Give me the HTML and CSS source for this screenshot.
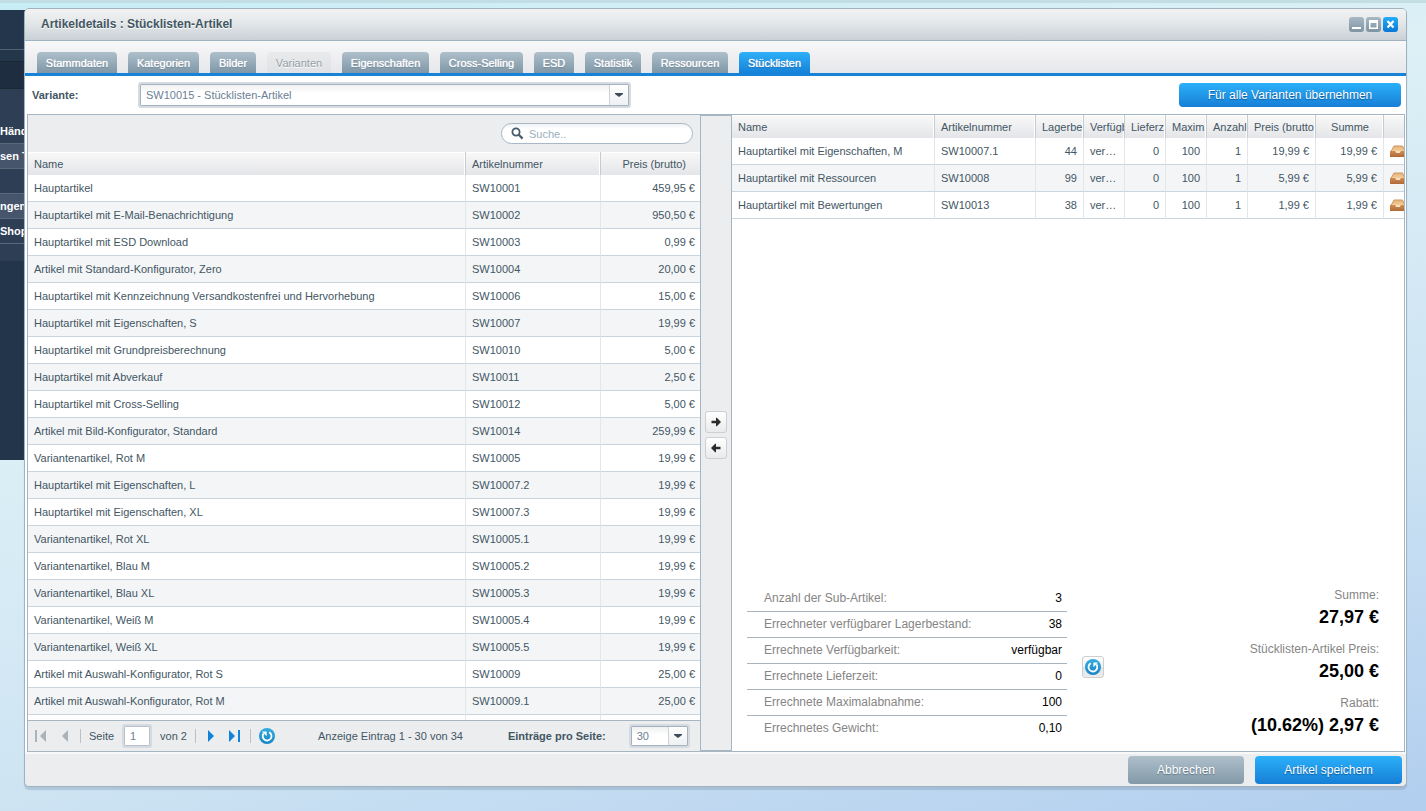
FILE: index.html
```html
<!DOCTYPE html>
<html lang="de">
<head>
<meta charset="utf-8">
<title>Artikeldetails : Stücklisten-Artikel</title>
<link rel="stylesheet" href="styles.css">
</head>
<body>
<svg class="defs" width="0" height="0" aria-hidden="true">
  <defs>
    <linearGradient id="boxTop" x1="0" y1="0" x2="0" y2="1"><stop offset="0" stop-color="#e2b37c"/><stop offset="1" stop-color="#f6cf9a"/></linearGradient>
    <linearGradient id="boxFront" x1="0" y1="0" x2="0" y2="1"><stop offset="0" stop-color="#d08c55"/><stop offset="1" stop-color="#b06a38"/></linearGradient>
    <linearGradient id="disc" x1="0" y1="0" x2="0" y2="1"><stop offset="0" stop-color="#35ade0"/><stop offset="1" stop-color="#1584c4"/></linearGradient>
    <symbol id="inbox" viewBox="0 0 16 12">
      <path d="M4 1h8.500l2.500 5.500h-14z" fill="url(#boxTop)" stroke="#cf9660"/>
      <path d="M0 6h5l1.500 2h3l1.500-2h5v6h-16z" fill="url(#boxFront)"/>
      <path d="M5 6h6l-1.500 2h-3z" fill="#fbe0b8"/>
    </symbol>
    <symbol id="reload" viewBox="0 0 16 16">
      <circle cx="8" cy="8" r="8" fill="url(#disc)"/>
      <path d="M10.200 4.200A4.400 4.400 0 1 1 4.600 5.400" fill="none" stroke="#fff" stroke-width="1.800"/>
      <path d="M3 3.600h4.600v4.600z" fill="#fff"/>
    </symbol>
    <symbol id="arrow" viewBox="0 0 10 10">
      <path d="M0.500 3.800h4.500V0.800h0.800L10 5l-4.200 4.200H5v-3H0.500z" fill="#2b2b2b"/>
    </symbol>
    <symbol id="caret" viewBox="0 0 8 4"><path d="M0 0h8v1L4 4 0 1z" fill="#3d4c5a"/></symbol>
  </defs>
</svg>

<nav class="sidebar" aria-label="Desktop">
  <div class="side-head"></div>
  <div class="side-sub"></div>
  <div class="side-dark"></div>
  <ul class="side-list">
    <li class="tall">Händ</li>
    <li class="light">sen T</li>
    <li></li>
    <li class="light">ngen</li>
    <li>Shop</li>
    <li class="end"></li>
  </ul>
</nav>

<main class="window">
  <header class="titlebar">
    <h1>Artikeldetails : Stücklisten-Artikel</h1>
    <div class="tools">
      <button type="button" aria-label="Minimieren"><svg width="15" height="15"><path d="M3 10h9v2h-9z" fill="#fff"/></svg></button>
      <button type="button" aria-label="Maximieren"><svg width="15" height="15"><path d="M3 3h9v9h-9zM4.500 6v4.500h6V6z" fill="#fff" fill-rule="evenodd"/></svg></button>
      <button type="button" class="close" aria-label="Schließen"><svg width="15" height="15"><path d="M4.500 4l6 6.500M10.500 4l-6 6.500" stroke="#fff" stroke-width="2.200"/></svg></button>
    </div>
  </header>

  <nav class="tabs" aria-label="Bereiche">
    <button type="button">Stammdaten</button>
    <button type="button">Kategorien</button>
    <button type="button">Bilder</button>
    <button type="button" disabled>Varianten</button>
    <button type="button">Eigenschaften</button>
    <button type="button">Cross-Selling</button>
    <button type="button">ESD</button>
    <button type="button">Statistik</button>
    <button type="button">Ressourcen</button>
    <button type="button" class="active">Stücklisten</button>
  </nav>

  <div class="variantbar">
    <label for="variant">Variante:</label>
    <span class="combo variant">
      <select id="variant"><option>SW10015 - Stücklisten-Artikel</option></select>
      <span class="trigger"><svg width="8" height="4"><use href="#caret"/></svg></span>
    </span>
    <button type="button" class="btn primary apply">Für alle Varianten übernehmen</button>
  </div>

  <div class="panels">
    <section class="source">
      <div class="searchbar">
        <span class="search">
          <svg width="13" height="13" viewBox="0 0 13 13"><circle cx="5" cy="5" r="3.600" fill="none" stroke="#475b6c" stroke-width="1.800"/><path d="M7.800 7.800L11.600 11.600" stroke="#475b6c" stroke-width="2.200"/></svg>
          <input type="text" placeholder="Suche.." aria-label="Suche">
        </span>
      </div>
      <div class="scroll">
        <table class="grid">
          <colgroup><col><col class="w135"><col class="w99"></colgroup>
          <thead><tr><th>Name</th><th>Artikelnummer</th><th class="sum">Preis (brutto)</th></tr></thead>
          <tbody>
            <tr><td>Hauptartikel</td><td>SW10001</td><td class="num">459,95 €</td></tr>
            <tr><td>Hauptartikel mit E-Mail-Benachrichtigung</td><td>SW10002</td><td class="num">950,50 €</td></tr>
            <tr><td>Hauptartikel mit ESD Download</td><td>SW10003</td><td class="num">0,99 €</td></tr>
            <tr><td>Artikel mit Standard-Konfigurator, Zero</td><td>SW10004</td><td class="num">20,00 €</td></tr>
            <tr><td>Hauptartikel mit Kennzeichnung Versandkostenfrei und Hervorhebung</td><td>SW10006</td><td class="num">15,00 €</td></tr>
            <tr><td>Hauptartikel mit Eigenschaften, S</td><td>SW10007</td><td class="num">19,99 €</td></tr>
            <tr><td>Hauptartikel mit Grundpreisberechnung</td><td>SW10010</td><td class="num">5,00 €</td></tr>
            <tr><td>Hauptartikel mit Abverkauf</td><td>SW10011</td><td class="num">2,50 €</td></tr>
            <tr><td>Hauptartikel mit Cross-Selling</td><td>SW10012</td><td class="num">5,00 €</td></tr>
            <tr><td>Artikel mit Bild-Konfigurator, Standard</td><td>SW10014</td><td class="num">259,99 €</td></tr>
            <tr><td>Variantenartikel, Rot M</td><td>SW10005</td><td class="num">19,99 €</td></tr>
            <tr><td>Hauptartikel mit Eigenschaften, L</td><td>SW10007.2</td><td class="num">19,99 €</td></tr>
            <tr><td>Hauptartikel mit Eigenschaften, XL</td><td>SW10007.3</td><td class="num">19,99 €</td></tr>
            <tr><td>Variantenartikel, Rot XL</td><td>SW10005.1</td><td class="num">19,99 €</td></tr>
            <tr><td>Variantenartikel, Blau M</td><td>SW10005.2</td><td class="num">19,99 €</td></tr>
            <tr><td>Variantenartikel, Blau XL</td><td>SW10005.3</td><td class="num">19,99 €</td></tr>
            <tr><td>Variantenartikel, Weiß M</td><td>SW10005.4</td><td class="num">19,99 €</td></tr>
            <tr><td>Variantenartikel, Weiß XL</td><td>SW10005.5</td><td class="num">19,99 €</td></tr>
            <tr><td>Artikel mit Auswahl-Konfigurator, Rot S</td><td>SW10009</td><td class="num">25,00 €</td></tr>
            <tr><td>Artikel mit Auswahl-Konfigurator, Rot M</td><td>SW10009.1</td><td class="num">25,00 €</td></tr>
            <tr><td></td><td></td><td></td></tr>
          </tbody>
        </table>
      </div>
      <div class="pager">
        <button type="button" disabled aria-label="Erste Seite"><svg width="14" height="14"><path d="M1 1h2v12H1zM12 1v12L6 7z" fill="#aab2ba"/></svg></button>
        <button type="button" disabled aria-label="Vorherige Seite"><svg width="16" height="14"><path d="M12 1v12L6 7z" fill="#aab2ba"/></svg></button>
        <i class="sep"></i>
        <label for="page">Seite</label>
        <input id="page" type="text" value="1">
        <span>von 2</span>
        <i class="sep"></i>
        <button type="button" aria-label="Nächste Seite"><svg width="14" height="14"><path d="M4 1v12L10 7z" fill="#1283d8"/></svg></button>
        <button type="button" aria-label="Letzte Seite"><svg width="16" height="14"><path d="M3 1v12L9 7zM12 1h2v12h-2z" fill="#1283d8"/></svg></button>
        <i class="sep"></i>
        <button type="button" aria-label="Aktualisieren"><svg width="16" height="16"><use href="#reload"/></svg></button>
        <span class="range">Anzeige Eintrag 1 - 30 von 34</span>
        <label class="bold" for="size">Einträge pro Seite:</label>
        <span class="combo size">
          <select id="size"><option>30</option></select>
          <span class="trigger"><svg width="8" height="4"><use href="#caret"/></svg></span>
        </span>
      </div>
    </section>

    <div class="mover">
      <button type="button" class="icon-btn" aria-label="Hinzufügen"><svg width="10" height="10"><use href="#arrow"/></svg></button>
      <button type="button" class="icon-btn back" aria-label="Entfernen"><svg width="10" height="10"><use href="#arrow"/></svg></button>
    </div>

    <section class="target">
      <div class="scroll">
        <table class="grid">
          <colgroup><col><col class="w101"><col class="w48"><col class="w41"><col class="w41"><col class="w41"><col class="w41"><col class="w68"><col class="w68"><col class="w20"></colgroup>
          <thead><tr><th>Name</th><th>Artikelnummer</th><th title="Lagerbestand">Lagerbe</th><th title="Verfügbarkeit">Verfügb</th><th title="Lieferzeit">Lieferz</th><th title="Maximalabnahme">Maxim</th><th>Anzahl</th><th title="Preis (brutto)">Preis (brutto</th><th class="sum">Summe</th><th></th></tr></thead>
          <tbody>
            <tr><td>Hauptartikel mit Eigenschaften, M</td><td>SW10007.1</td><td class="num">44</td><td>verfügbar</td><td class="num">0</td><td class="num">100</td><td class="num">1</td><td class="num">19,99 €</td><td class="num">19,99 €</td><td class="act"><svg width="16" height="12"><use href="#inbox"/></svg></td></tr>
            <tr><td>Hauptartikel mit Ressourcen</td><td>SW10008</td><td class="num">99</td><td>verfügbar</td><td class="num">0</td><td class="num">100</td><td class="num">1</td><td class="num">5,99 €</td><td class="num">5,99 €</td><td class="act"><svg width="16" height="12"><use href="#inbox"/></svg></td></tr>
            <tr><td>Hauptartikel mit Bewertungen</td><td>SW10013</td><td class="num">38</td><td>verfügbar</td><td class="num">0</td><td class="num">100</td><td class="num">1</td><td class="num">1,99 €</td><td class="num">1,99 €</td><td class="act"><svg width="16" height="12"><use href="#inbox"/></svg></td></tr>
          </tbody>
        </table>
      </div>
      <div class="summary">
        <dl class="facts">
          <div><dt>Anzahl der Sub-Artikel:</dt><dd>3</dd></div>
          <div><dt>Errechneter verfügbarer Lagerbestand:</dt><dd>38</dd></div>
          <div><dt>Errechnete Verfügbarkeit:</dt><dd>verfügbar</dd></div>
          <div><dt>Errechnete Lieferzeit:</dt><dd>0</dd></div>
          <div><dt>Errechnete Maximalabnahme:</dt><dd>100</dd></div>
          <div><dt>Errechnetes Gewicht:</dt><dd>0,10</dd></div>
        </dl>
        <button type="button" class="icon-btn" aria-label="Neu berechnen"><svg width="16" height="16"><use href="#reload" transform="matrix(-1 0 0 1 16 0)"/></svg></button>
        <dl class="totals">
          <div><dt>Summe:</dt><dd>27,97 €</dd></div>
          <div><dt>Stücklisten-Artikel Preis:</dt><dd>25,00 €</dd></div>
          <div><dt>Rabatt:</dt><dd>(10.62%) 2,97 €</dd></div>
        </dl>
      </div>
    </section>
  </div>

  <footer class="footer">
    <button type="button" class="btn secondary">Abbrechen</button>
    <button type="button" class="btn primary">Artikel speichern</button>
  </footer>
</main>
</body>
</html>
```

FILE: styles.css
```css
* { box-sizing: border-box; }

html { height: 100%; }

body {
  margin: 0;
  height: 100%;
  padding-top: 7px;
  border-top: 3px solid #c3dde5;
  overflow: hidden;
  background: linear-gradient(165deg, #c8edf6 0%, #dcf0f6 35%, #cfe5f3 65%, #b2ceef 100%);
  font: 11px/14px "Liberation Sans", Arial, sans-serif;
  color: #435663;
}

button, input, select { font: inherit; color: inherit; margin: 0; padding: 0; }
button { border: 0; background: none; }
svg { display: block; }
h1, dl, dd, ul { margin: 0; padding: 0; }
.defs { position: absolute; }

/* desktop sidebar */
.sidebar {
  width: 26px;
  height: 450px;
  overflow: hidden;
  background: #23354b;
  color: #fff;
  font-weight: bold;
  white-space: nowrap;
}
.side-head { height: 40px; border-bottom: 1px solid #506373; background: #23364b; }
.side-sub { height: 11px; background: #24364a; }
.side-dark { height: 28px; background: #1e2d3f; border-top: 1px solid #1a2838; border-bottom: 1px solid #1a2838; }
.side-list { list-style: none; background: #2e3e55; }
.side-list li { height: 25px; line-height: 24px; border-bottom: 1px solid #5a6a7b; }
.side-list .tall { height: 55px; padding-top: 30px; }
.side-list .light { background: #46556b; }
.side-list .end { height: 17px; border: 0; }

/* window */
.window {
  position: absolute;
  top: 8px;
  right: 19px;
  bottom: 24px;
  left: 24px;
  display: flex;
  flex-direction: column;
  border: 1px solid #a0b2c0;
  border-radius: 5px;
  background: #ebedef;
  box-shadow: 0 3px 1px rgba(120, 145, 170, 0.35);
}
.titlebar {
  display: flex;
  align-items: center;
  justify-content: space-between;
  height: 32px;
  padding: 0 8px 0 16px;
  border-bottom: 1px solid #a0b2c0;
  border-radius: 4px 4px 0 0;
  background: linear-gradient(#f2f2f2, #e4e7e9 45%, #c9d1d7);
}
.titlebar h1 { font-size: 12px; line-height: 16px; padding-bottom: 2px; text-shadow: 0 1px 0 #fff; }
.tools { display: flex; gap: 2px; }
.tools button { width: 15px; height: 15px; border-radius: 3px; background: linear-gradient(#a8b8c3, #7d94a3); }
.tools .close { background: linear-gradient(#25adf8, #0878d4); }

.tabs {
  display: grid;
  grid-template-columns: 80px 71px 46px 64px 87px 83px 40px 56px 76px 71px;
  align-items: end;
  gap: 11px;
  height: 35px;
  padding-left: 12px;
  border-bottom: 3px solid #1682d8;
  background: linear-gradient(#f8f8f9, #e6e7ea);
  white-space: nowrap;
}
.tabs button {
  height: 21px;
  padding-top: 1px;
  border-radius: 4px 4px 0 0;
  background: linear-gradient(#aebfca, #7f97a7);
  color: #fff;
  text-shadow: 0 0 1px #fff, 0 1px 1px #667d8d;
}
.tabs button:disabled { background: linear-gradient(#e9eaec, #dfe1e4); color: #939ea6; text-shadow: 0 1px 0 #fff; }
.tabs .active { background: linear-gradient(#2eb0f8, #1682d8); text-shadow: 0 0 1px #fff, 0 1px 1px #0f62a8; }

.variantbar {
  display: flex;
  align-items: center;
  height: 38px;
  padding: 0 5px 0 7px;
  background: #fff;
}
.variantbar label { width: 106px; font-weight: bold; }

.combo { display: grid; height: 26px; border: 2px solid #d6dbe1; border-radius: 3px; }
.combo select, .combo .trigger { grid-area: 1 / 1; }
.combo select {
  width: 100%;
  padding-left: 5px;
  appearance: none;
  border: 1px solid #a3b2be;
  border-radius: 1px;
  background: linear-gradient(#eff0f1, #fff 8px);
  color: #6b8095;
}
.combo .trigger {
  display: flex;
  align-items: center;
  justify-content: center;
  justify-self: end;
  width: 19px;
  margin: 1px;
  border-left: 1px solid #cdd2d8;
  background: linear-gradient(#fff, #eff0f3);
  pointer-events: none;
}
.variant { width: 493px; }
.size { width: 61px; height: 24px; margin-left: 15px; }

.btn { height: 28px; border-radius: 4px; font-size: 12px; color: #fff; }
.primary { width: 147px; background: linear-gradient(#2bb0fa, #167fd6); text-shadow: 0 1px 1px #0d5a9d; }
.secondary { width: 116px; background: linear-gradient(#afbfca, #8299a8); text-shadow: 0 1px 1px #5d7484; }
.apply { width: 222px; height: 24px; margin-left: auto; }

/* panels */
.panels { flex: 1; min-height: 0; display: flex; padding: 0 1px 0 2px; background: #fff; }
.source, .target {
  flex: 1 1 0;
  min-width: 0;
  display: flex;
  flex-direction: column;
  border: 1px solid #a5b5c1;
  background: #fff;
}
.scroll { flex: 1; min-height: 0; overflow: hidden; }

.searchbar { display: flex; justify-content: flex-end; height: 37px; padding: 8px 7px 0; background: #ebedef; }
.search {
  display: flex;
  align-items: center;
  gap: 5px;
  width: 192px;
  height: 21px;
  padding: 0 9px;
  border: 1px solid #a9b8c6;
  border-radius: 11px;
  background: linear-gradient(#eff2f4, #fff 5px);
}
.search input { flex: 1; min-width: 0; border: 0; background: none; outline: 0; }
.search input::placeholder { color: #9aafbb; }

.grid { width: 100%; table-layout: fixed; border-collapse: separate; border-spacing: 0; }
.grid th {
  height: 23px;
  padding: 0 0 0 6px;
  overflow: hidden;
  border-right: 1px solid #c6cbd0;
  background: linear-gradient(#f9f9f9, #e4e5e8);
  box-shadow: inset -1px 1px 0 #fff;
  font-weight: normal;
  text-align: left;
  white-space: nowrap;
}
.grid .sum { padding-right: 14px; text-align: right; }
.grid td {
  height: 27px;
  padding: 0 6px;
  overflow: hidden;
  border-right: 1px solid #e4e7ea;
  border-bottom: 1px solid #cbd5de;
  text-overflow: ellipsis;
  white-space: nowrap;
}
.grid th:last-child, .grid td:last-child { border-right: 0; }
.grid th:last-child { box-shadow: inset 0 1px 0 #fff; }
.grid tr:nth-child(even) td { background: #f3f5f7; }
.grid .num { text-align: right; }
.source .num { padding-right: 5px; }
.grid .act { padding-right: 0; text-overflow: clip; }
.w135 { width: 135px; }
.w99 { width: 99px; }
.w101 { width: 101px; }
.w48 { width: 48px; }
.w41 { width: 41px; }
.w68 { width: 68px; }
.w20 { width: 20px; }

.pager {
  display: flex;
  align-items: center;
  gap: 8px;
  height: 31px;
  padding-left: 6px;
  border-top: 1px solid #a5b5c1;
  background: #ebedef;
  white-space: nowrap;
}
.sep { width: 1px; height: 14px; background: #b9c0c7; }
.pager input {
  width: 30px;
  height: 24px;
  padding-left: 6px;
  border: 2px solid #d6dbe1;
  border-radius: 3px;
  box-shadow: inset 0 0 0 1px #b7c2cb;
  color: #6b8095;
}
.range { margin-left: 35px; }
.bold { margin-left: 37px; font-weight: bold; }

.mover {
  display: flex;
  flex-direction: column;
  align-items: center;
  justify-content: center;
  gap: 4px;
  width: 30px;
  padding-top: 3px;
  border-top: 2px solid #a5b5c1;
  border-bottom: 2px solid #a5b5c1;
  background: #ebedef;
}
.icon-btn {
  display: flex;
  align-items: center;
  justify-content: center;
  width: 22px;
  height: 22px;
  border: 1px solid #cfcfd1;
  border-radius: 3px;
  background: linear-gradient(#fff 0%, #f1f1f1 50%, #e3e4e6 51%, #ececed 100%);
}
.mover .icon-btn { background: linear-gradient(#fff, #e9eaeb); }
.back svg { transform: rotate(180deg); }

/* summary */
.summary { display: flex; align-items: flex-start; padding: 0 25px 4px 15px; font-size: 12px; }
.facts { width: 320px; padding-top: 1px; }
.facts div {
  display: flex;
  justify-content: space-between;
  height: 26px;
  padding: 0 5px 0 17px;
  border-bottom: 1px solid #a9b6c0;
  line-height: 25px;
}
.facts div:last-child { border: 0; }
dt { color: #858585; }
dd { color: #000; }
.summary .icon-btn { margin: 71px 0 0 15px; }
.totals { margin-left: auto; text-align: right; }
.totals div { height: 54px; }
.totals dt { line-height: 20px; }
.totals dd { font-size: 18px; line-height: 24px; font-weight: bold; }

.footer {
  display: flex;
  justify-content: flex-end;
  gap: 11px;
  height: 34px;
  padding: 2px 4px 0;
  border-top: 2px solid #f7f8f9;
  border-radius: 0 0 4px 4px;
}
```
